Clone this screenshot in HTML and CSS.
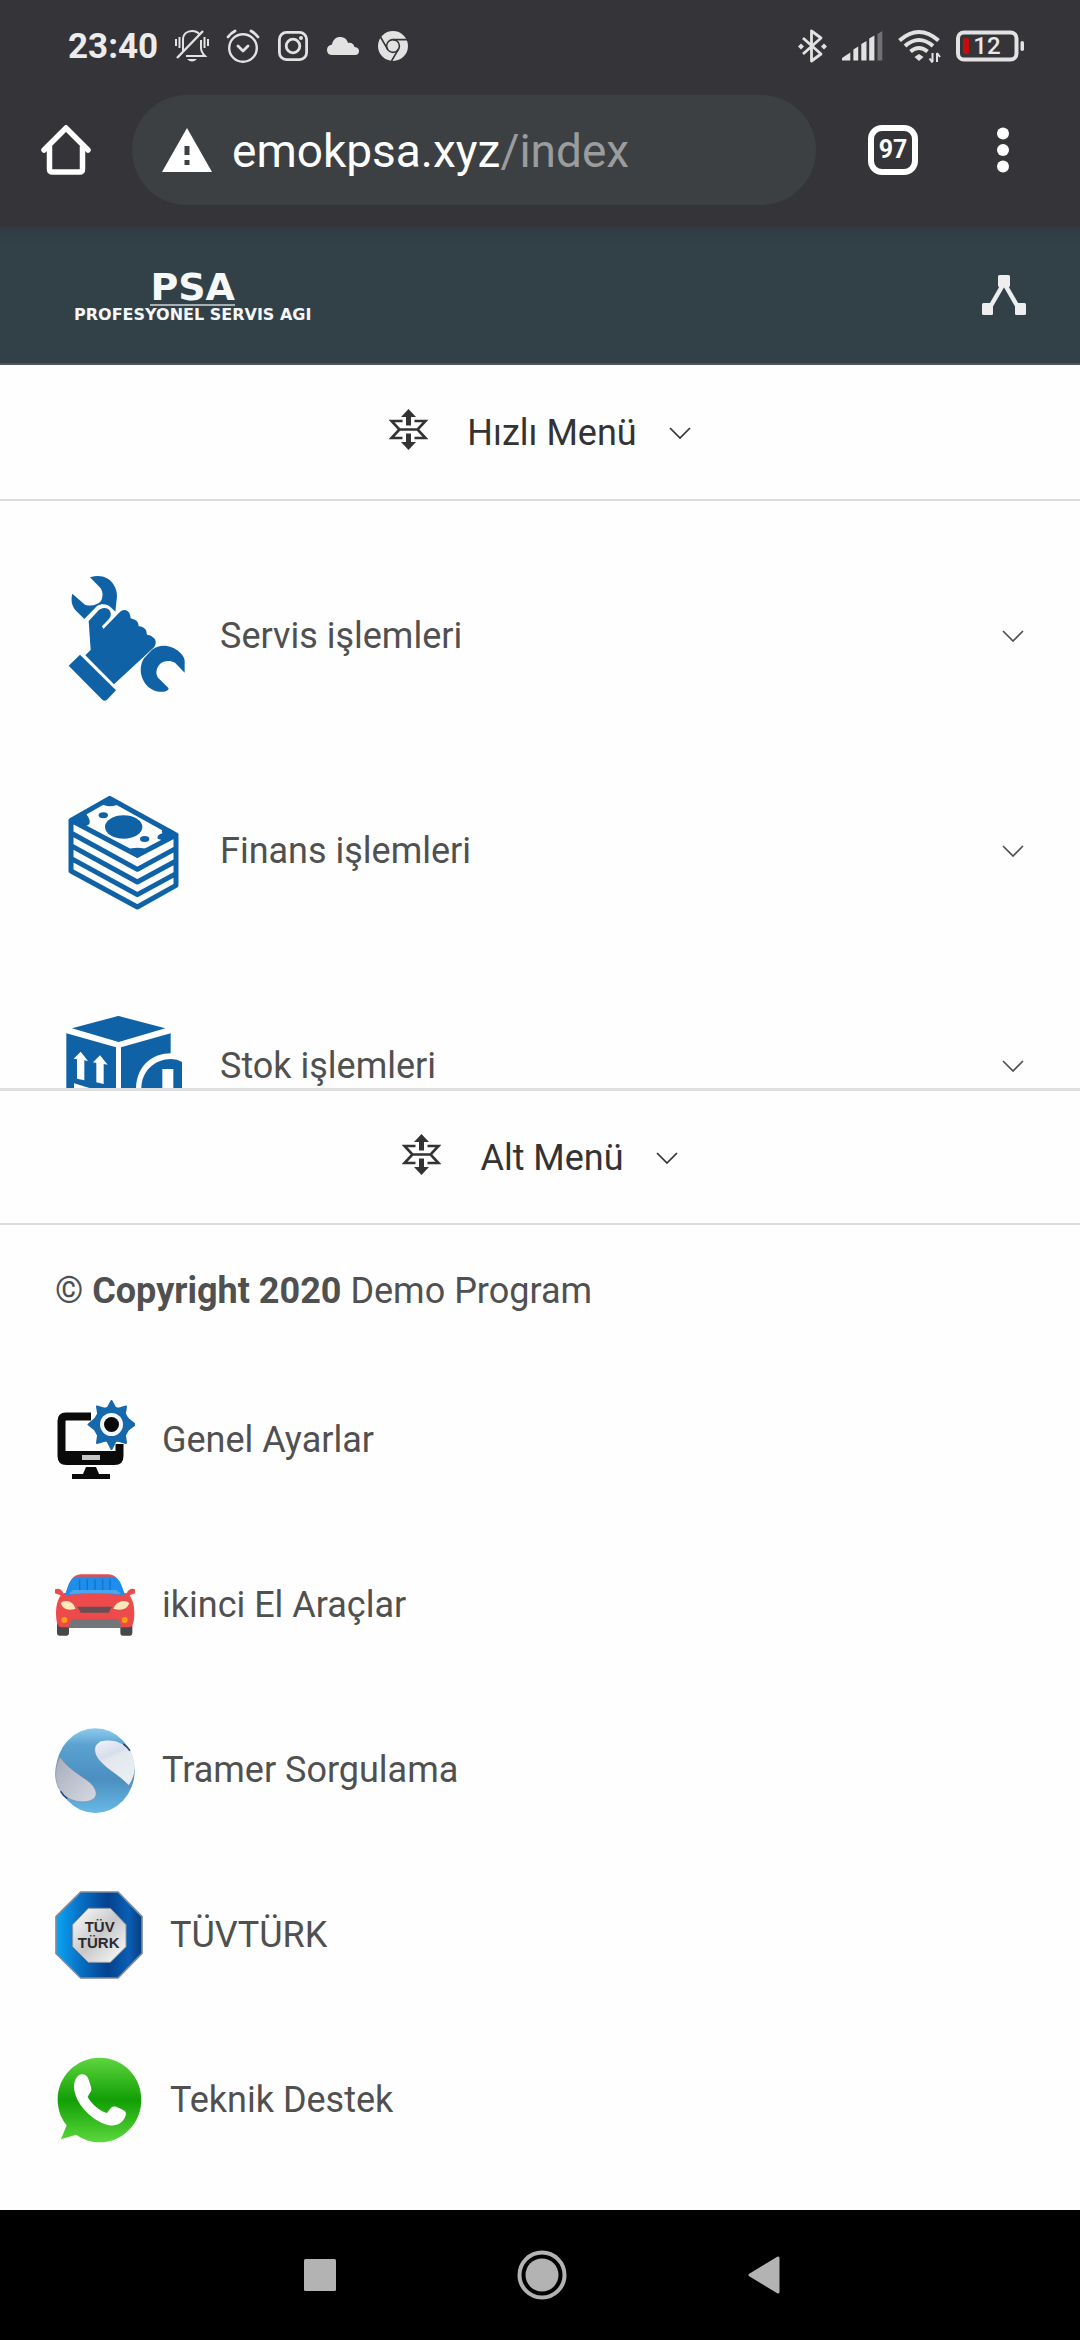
FILE: index.html
```html
<!DOCTYPE html>
<html lang="tr">
<head>
<meta charset="utf-8">
<meta name="viewport" content="width=device-width, initial-scale=1">
<title>PSA Profesyonel Servis Ağı</title>
<link rel="stylesheet" href="styles.css">
</head>
<body>
<svg class="sprite" aria-hidden="true">
  <symbol id="chevron" viewBox="0 0 22 12"><path d="M1 1 11 11 21 1" fill="none" stroke="currentColor" stroke-width="1.7"/></symbol>
  <symbol id="expand" viewBox="0 0 39 48">
    <g fill="none" stroke="currentColor" stroke-width="2.6">
      <path d="M13.500 12H2.500l8 8.500-8 8.500h11M25.500 12h11l-8 8.500 8 8.500h-11M10.500 20.500h18"/>
    </g>
    <path d="M19.500 0 27 8h-5v8.500h-5V8h-5zM19.500 41 27 33h-5v-8.500h-5V33h-5z" fill="currentColor"/>
  </symbol>
</svg>

<div class="statusbar">
  <div class="status-left">
    <span class="clock">23:40</span>
    <svg width="34" height="34" viewBox="0 0 34 34" fill="none" stroke="currentColor" stroke-width="2">
      <path d="M8 23V11C8 5 12 2 17 2c4 0 6 1 8 4M26 11v8c0 3 1 5 4 8H11" />
      <path d="M2 29 28 2" stroke-width="2.400"/><path d="M12 30h10q-5 5-10 0z" fill="currentColor" stroke="none"/>
      <path d="M1 10v7M4.500 8v11M29.500 8v11M33 10v7"/>
    </svg>
    <svg width="34" height="34" viewBox="0 0 34 34" fill="none" stroke="currentColor" stroke-width="2.400" stroke-linecap="round" stroke-linejoin="round">
      <circle cx="17" cy="19" r="13.800"/><path d="m12 17 5 5 5-5M2 8q3-4 7-6M32 8q-3-4-7-6" stroke-width="2.800"/>
    </svg>
    <svg width="32" height="32" viewBox="0 0 32 32" fill="none" stroke="currentColor" stroke-width="2.800">
      <rect x="2.400" y="2.400" width="27.200" height="27.200" rx="7"/><circle cx="16" cy="16" r="6.800"/><circle cx="24" cy="8" r="2" fill="currentColor" stroke="none"/>
    </svg>
    <svg width="34" height="20" viewBox="0 0 34 20"><path d="M6 19C2 19 1 16 1 13.500S3 9 6 8.500C7 3.500 10 1 14 1c4 0 7 2 8 6 3-1 6 1 6.500 4C32 11.500 33 13 33 15s-1 4-4 4z" fill="currentColor"/></svg>
    <svg width="32" height="32" viewBox="0 0 32 32">
      <circle cx="16" cy="16" r="15" fill="currentColor"/>
      <g fill="none" stroke="#353539" stroke-width="1.600"><circle cx="16" cy="16" r="6.400"/><path d="M16 9.600h14M10.500 19.200 3.500 7M21.500 19.200 14.500 31"/></g>
    </svg>
  </div>
  <div class="status-right">
    <svg width="29" height="34" viewBox="0 0 29 34" fill="none" stroke="currentColor" stroke-width="2.800" stroke-linejoin="round">
      <path d="M5 9 23 25 13.500 32V2L23 9 5 25"/><path d="m3 14.500 3 3-3 3-3-3zM26 14.500l3 3-3 3-3-3z" fill="currentColor" stroke="none"/>
    </svg>
    <svg width="41" height="30" viewBox="0 0 41 30" fill="currentColor">
      <path d="M0 29.500V27l8.300-5.400v7.900zM11.400 18.500l4.800-3v14h-4.800zM19.300 13l5.200-3v19.500h-5.200zM27.200 7.500l5.200-3v25h-5.200z"/><path d="M35.500 3 40.300 0v29.500h-4.800z" opacity=".35"/>
    </svg>
    <svg width="43" height="34" viewBox="0 0 43 34" fill="none" stroke="currentColor" stroke-width="4">
      <path d="M1.500 11.500q19.500-17 39 0M7 17q14-12 28 0M12.500 22.500q8.500-7 17 0"/><path d="m21 25 4.500 3-4.500 4-4.500-4z" fill="currentColor" stroke="none"/>
      <path d="M34.500 24v9M34.500 33.500l-3-4M39 33v-9M39 24l3 4" stroke-width="2"/>
    </svg>
    <svg width="68" height="32" viewBox="0 0 68 32">
      <rect x="2" y="2.500" width="58.500" height="27" rx="6" fill="none" stroke="currentColor" stroke-width="4"/>
      <rect x="64.500" y="11" width="3.500" height="10" rx="1.700" fill="currentColor"/>
      <rect x="7" y="8" width="6" height="16" rx="2" fill="#c60c0c"/>
      <text class="battery-level" x="31" y="24" text-anchor="middle">12</text>
    </svg>
  </div>
</div>

<nav class="toolbar" aria-label="Tarayıcı">
  <button class="tool home" aria-label="Ana sayfa"><svg width="50" height="50" viewBox="0 0 50 50" fill="none" stroke="currentColor" stroke-width="5.500" stroke-linejoin="round" stroke-linecap="round"><path d="M3 25 25 3l22 22" stroke-linejoin="miter"/><path d="M8.500 22v22q0 3 3 3h27q3 0 3-3V22"/></svg></button>
  <button class="address">
    <svg width="50" height="44" viewBox="0 0 50 44"><path d="M25 0 50 44H0z" fill="currentColor"/><path d="M22.500 18h5v9h-5zM22.500 32h5v5h-5z" fill="#3c4043"/></svg>
    <span class="url">emokpsa.xyz<span class="path">/index</span></span>
  </button>
  <button class="tool tabs" aria-label="Sekmeler">97</button>
  <button class="tool more" aria-label="Diğer"><svg width="50" height="50" viewBox="0 0 50 50" fill="currentColor"><circle cx="25" cy="8.500" r="6"/><circle cx="25" cy="25" r="6"/><circle cx="25" cy="41.500" r="6"/></svg></button>
</nav>

<header class="site-header">
  <a class="logo" href="#"><span class="logo-name">PSA</span><span class="logo-tag">PROFESYONEL SERVIS AGI</span></a>
  <button class="share" aria-label="Menü"><svg width="44" height="40" viewBox="0 0 44 40" fill="currentColor"><path d="M22 8 7 34M22 8l15 26" stroke="currentColor" stroke-width="4.500"/><rect x="16" width="12" height="12" rx="1.500"/><rect y="28" width="11" height="12" rx="1.500"/><rect x="33" y="28" width="11" height="12" rx="1.500"/></svg></button>
</header>

<main class="page">
  <button class="section-toggle"><svg class="expand"><use href="#expand"/></svg><span class="section-name">Hızlı Menü</span><svg class="chevron"><use href="#chevron"/></svg></button>

  <ul class="quick-menu">
    <li><button class="quick-item">
      <svg class="quick-icon" viewBox="78 63 360 390" fill="#1062a6">
        <path d="M150 82C180 73 205 80 221 104c10 15 12 34 8 52l-3 29-12-12c-12-12-30-13-43-5l-38 39-25-25C95 168 92 150 97 131l38 33c17 6 38 1 48-11 7-12 6-27-1-38z"/>
        <path d="M146 213l26-28c10-14 31-15 38-2 5 10 2 18-4 25l-20 21 4 8 49-50c10-11 26-9 31 7l2 11 12 4q12 5 12 20 14 1 22 11l3 14q16 2 24 14 6 13-3 24L222 403l-86-87 16-16z"/>
        <path d="M120 314 228 421 201 449q-7 6-14 0L86 347z"/>
        <path d="M434 368l-29-30c-17-9-37-5-47 6-10 12-12 29-3 40l31 31q-1 9-15 10c-25 2-45-9-57-27-17-26-14-54-2-73l24-26c27-20 61-12 82 7 11 9 16 19 16 28z"/>
      </svg>
      <span>Servis işlemleri</span><svg class="chevron"><use href="#chevron"/></svg></button></li>
    <li><button class="quick-item">
      <svg class="quick-icon" viewBox="78 48 360 390" fill="none" stroke="#1062a6" stroke-width="15" stroke-linejoin="round">
        <path d="M93 151 209 85 408 195 292 256zM93 151V303L292 411 408 346V195M93 189 292 298 408 235M93 227 292 336 408 273M93 265 292 374 408 311"/>
        <g fill="#1062a6" stroke="none"><ellipse cx="251" cy="171" rx="56" ry="35"/><ellipse cx="190" cy="136" rx="14" ry="9"/><ellipse cx="314" cy="207" rx="14" ry="9"/>
        <path d="M176 97q35 24 69 0l-36-16zM93 150q40 28 55 12 5-12-10-31zM258 239q35-12 69 0l-35 25zM408 195q-10-20-34-21-12 5-7 16-18 6-14 16l30 10z"/></g>
      </svg>
      <span>Finans işlemleri</span><svg class="chevron"><use href="#chevron"/></svg></button></li>
    <li><button class="quick-item">
      <svg class="quick-icon" viewBox="78 33 360 390" fill="#1062a6">
        <path d="M96 115 226 80q9-4 18 0L376 115 236 156zM79 130 228 172V390L79 345zM243 172 392 130V190C340 190 288 225 288 300v75l-45 15z"/>
        <path d="M304 294c0-50 40-87 90-87q18 0 32 9V390h-90q-32-40-32-96z"/>
        <g fill="#fff"><path d="M122 185 144 213l-11-2v60l-22-5v-58l-10-2zM180 196 203 224l-12-2v60l-22-5v-58l-10-2zM102 280l80 24v14l-80-24zM367 237h33v70h-33z"/></g>
      </svg>
      <span>Stok işlemleri</span><svg class="chevron"><use href="#chevron"/></svg></button></li>
  </ul>

  <button class="section-toggle lower"><svg class="expand"><use href="#expand"/></svg><span class="section-name">Alt Menü</span><svg class="chevron"><use href="#chevron"/></svg></button>

  <p class="copyright">© <strong>Copyright 2020</strong> Demo Program</p>

  <ul class="link-list">
    <li><a href="#">
      <svg width="80" height="88" viewBox="0 0 80 88">
        <path d="M36 20.500H11q-4.500 0-4.500 4.500v35q0 5 5 5h48q5 0 5-5V48" fill="none" stroke="#0a0a0a" stroke-width="8"/>
        <path d="M8 55h58v11H8z" fill="#0a0a0a"/><path d="M27 59h18v5H27z" fill="#c4c4c4"/>
        <path d="M31 71h10l3 7h11v5H17v-5h11z" fill="#0a0a0a"/>
        <circle cx="56.500" cy="28.500" r="20" fill="#fefefe"/>
        <path d="m56.500 5 4.500 8.500 10-3-1.500 9.500 10.500 8.500-10.500 8 1.500 10.500-10-3-4.500 9-4.500-9-10 3 1.500-10.500-10-8 10-8.500-1.500-9.500 10 3z" fill="#1668ac" stroke="#1668ac" stroke-width="2" stroke-linejoin="round"/>
        <circle cx="56.500" cy="28.500" r="18" fill="#1668ac"/>
        <circle cx="56.500" cy="28.500" r="11.500" fill="#f4f7fa"/><circle cx="56.500" cy="28.500" r="7.500" fill="#080808"/>
      </svg><span>Genel Ayarlar</span></a></li>
    <li><a href="#">
      <svg width="80" height="88" viewBox="45 63 240 264">
        <path d="M51 250h36v30q0 7-7 7H58q-7 0-7-7zM241 250h36v30q0 7-7 7h-22q-7 0-7-7z" fill="#46484c"/>
        <path d="M45 148q18-6 25 12l8-2c10-30 18-55 45-55h82c27 0 35 25 47 55l8 2q8-18 25-12v12l-16 6q14 22 14 50c0 34-5 46-18 46H65c-14 0-17-20-17-46q0-28 14-50l-17-6z" fill="#ed4b4b"/>
        <path d="M76 166C84 132 94 110 110 110h108c18 0 28 22 36 56-60-6-118-6-178 0z" fill="#1e8eea"/>
        <path d="M98 150h132l14 13q-80-6-158 0z" fill="#4aa6f0"/><path d="M119 118v32M142 118v32M165 118v32M188 118v32M210 118v32" stroke="#1672c8" stroke-width="4"/>
        <path d="M112 200h104l-10 18h-84z" fill="#665056"/><path d="M94 238h142l8 26H84z" fill="#727579"/>
        <path d="M62 190c12-14 40-6 44 16-18 6-36 4-44-16zM268 190c-12-14-40-6-48 16 22 6 40 4 48-16z" fill="#ffe9ba"/>
        <circle cx="73" cy="240" r="9" fill="#ff9d17"/><circle cx="254" cy="240" r="9" fill="#ff9d17"/>
      </svg><span>ikinci El Araçlar</span></a></li>
    <li><a href="#">
      <svg width="80" height="88" viewBox="45 558 240 264">
        <defs><linearGradient id="ball" x2="0" y2="1"><stop offset="0" stop-color="#8dcbed"/><stop offset=".2" stop-color="#5ba2d0"/><stop offset=".6" stop-color="#4a8fc0"/><stop offset="1" stop-color="#68b8e6"/></linearGradient>
        <linearGradient id="shade" x2="1" y2="1"><stop offset="0" stop-color="#a6adbc"/><stop offset="1" stop-color="#d5d9e2"/></linearGradient>
        <linearGradient id="pale" x2=".4" y2="1"><stop offset="0" stop-color="#f3f4fb"/><stop offset=".4" stop-color="#d7ddec"/><stop offset=".5" stop-color="#e3e8ee"/><stop offset="1" stop-color="#e8eef2"/></linearGradient></defs>
        <ellipse cx="166" cy="692" rx="118" ry="127" fill="url(#ball)"/>
        <path d="M270 632C246 602 205 596 178 606C158 616 160 642 180 664C206 692 240 708 266 736C288 706 290 664 270 632z" fill="url(#pale)"/>
        <path d="M178 606C158 616 160 642 180 664C206 692 240 708 266 736" fill="none" stroke="#6c8fb0" stroke-width="2"/>
        <path d="M60 650C38 690 44 738 72 766C98 788 142 792 162 776C176 762 166 742 148 726C120 704 84 686 60 650z" fill="url(#shade)" stroke="#7b879a" stroke-width="2"/>
        <path d="M250 612q12 8 20 20M62 754q8 14 20 22" stroke="#254a84" stroke-width="5" fill="none"/>
      </svg><span>Tramer Sorgulama</span></a></li>
    <li><a href="#">
      <svg width="88" height="88" viewBox="45 63 264 264">
        <defs><linearGradient id="octagon"><stop offset="0" stop-color="#0aa5f5"/><stop offset=".28" stop-color="#0870c4"/><stop offset=".6" stop-color="#04418f"/><stop offset=".85" stop-color="#0a5fb4"/><stop offset="1" stop-color="#063b80"/></linearGradient>
        <linearGradient id="plate" x2="1" y2="1"><stop offset="0" stop-color="#fff"/><stop offset=".5" stop-color="#c8c8ca"/><stop offset="1" stop-color="#fff"/></linearGradient></defs>
        <path d="M122 66H234L306 140V250L234 324H122L48 250V140z" fill="url(#octagon)" stroke="#7b8b9c" stroke-width="5"/>
        <path d="M145 115H211L258 164V230L211 277H145L98 230V164z" fill="url(#plate)" stroke="#8a98a8" stroke-width="3"/>
        <text class="badge-text" x="179" y="187" text-anchor="middle">TÜV</text><text class="badge-text" x="176" y="235" text-anchor="middle">TÜRK</text>
      </svg><span>TÜVTÜRK</span></a></li>
    <li><a href="#">
      <svg width="88" height="88" viewBox="45 558 264 264">
        <defs><linearGradient id="bubble" x2="0" y2="1"><stop offset="0" stop-color="#5fd53f"/><stop offset=".5" stop-color="#119f05"/><stop offset="1" stop-color="#5bd83c"/></linearGradient></defs>
        <path d="M179 563c70 0 125 56 125 126s-55 128-125 128c-26 0-50-8-70-23l-46 14 17-42C63 745 53 718 53 689c0-70 56-126 126-126z" fill="url(#bubble)"/>
        <path d="M102 648c1-18 10-33 22-35 14-2 20 8 24 22 5 16 10 24 2 33l-7 12c10 20 34 42 58 49l12-16c8-6 16-3 24 1 14 6 24 10 20 22-6 22-26 34-50 30-50-12-105-66-105-118z" fill="#fff"/>
      </svg><span>Teknik Destek</span></a></li>
  </ul>
</main>

<nav class="system-nav" aria-label="Sistem">
  <button aria-label="Son uygulamalar"><svg width="32" height="32" viewBox="0 0 32 32"><rect width="32" height="32" rx="1.500" fill="currentColor"/></svg></button>
  <button aria-label="Ana ekran"><svg width="50" height="50" viewBox="0 0 50 50"><circle cx="25" cy="25" r="22.500" fill="none" stroke="currentColor" stroke-width="4"/><circle cx="25" cy="25" r="16.500" fill="currentColor"/></svg></button>
  <button aria-label="Geri"><svg width="32" height="38" viewBox="0 0 32 38"><path d="M30 2v34L2 19z" fill="currentColor" stroke="currentColor" stroke-width="3" stroke-linejoin="round"/></svg></button>
</nav>
</body>
</html>
```
FILE: styles.css
```css
* { box-sizing: border-box; }
body {
  margin: 0;
  min-height: 100vh;
  display: flex;
  flex-direction: column;
  background: #fefefe;
  color: #505050;
  font-family: Roboto, "Noto Sans", sans-serif;
  font-size: 36px;
  line-height: 53px;
}
button {
  margin: 0;
  padding: 0;
  border: 0;
  background: none;
  color: inherit;
  font: inherit;
  cursor: pointer;
}
a { color: inherit; text-decoration: none; }
ul { margin: 0; padding: 0; list-style: none; }
svg { display: block; flex: none; }
.sprite { position: absolute; width: 0; height: 0; }

.statusbar {
  display: flex;
  justify-content: space-between;
  align-items: center;
  height: 92px;
  padding: 0 56px 0 68px;
  background: #353539;
  color: #e2e2e2;
}
.status-left, .status-right { display: flex; align-items: center; }
.status-left { gap: 17px; }
.status-right { gap: 15px; }
.clock { font-size: 35px; font-weight: 700; color: #ececec; }
.battery-level { font-size: 24px; font-weight: 500; fill: #e8e8e8; }

.toolbar {
  display: flex;
  align-items: center;
  padding: 3px 52px 22px 41px;
  background: #353539;
  color: #fff;
}
.tool { flex: none; width: 50px; height: 50px; }
.address {
  flex: 1;
  display: flex;
  align-items: center;
  gap: 20px;
  height: 110px;
  margin: 0 52px 0 41px;
  padding: 0 30px;
  border-radius: 55px;
  background: #3c4043;
}
.url { padding-top: 2px; font-size: 46px; white-space: nowrap; }
.path { color: #9a9c9e; }
.tabs {
  border: 6px solid #fff;
  border-radius: 14px;
  font-size: 25px;
  font-weight: 700;
  line-height: 38px;
}
.more { margin-left: 60px; }

.site-header {
  display: flex;
  justify-content: space-between;
  align-items: center;
  height: 138px;
  padding: 0 54px 0 74px;
  border-bottom: 2px solid #50575c;
  background: linear-gradient(#2f3b42, #324148 20px);
  color: #eceef0;
}
.logo {
  display: flex;
  flex-direction: column;
  align-items: center;
  padding-top: 4px;
  color: #f6f7f8;
  font-family: "DejaVu Sans", sans-serif;
  font-weight: 700;
}
.logo-name {
  border-bottom: 2px solid #a9b0b4;
  font-size: 38px;
  line-height: 34px;
}
.logo-tag { font-size: 16px; line-height: 18px; }

.page { flex: 1; }
.section-toggle {
  display: flex;
  justify-content: center;
  align-items: center;
  width: 100%;
  height: 136px;
  padding-top: 2px;
  border-bottom: 2px solid #dcdcdc;
  color: #333;
}
.section-toggle.lower { height: 137px; border-top: 3px solid #dfdfdf; }
.section-name { margin: 0 32px 0 39px; }
.expand { width: 39px; height: 48px; }
.chevron { width: 22px; height: 12px; }

.quick-menu {
  max-height: 587px;
  padding-top: 27px;
  overflow-y: auto;
  scrollbar-width: none;
}
.quick-item {
  display: flex;
  align-items: center;
  gap: 34px;
  width: 100%;
  height: 215px;
  padding: 0 56px 0 66px;
  text-align: left;
}
.quick-icon { width: 120px; height: 130px; }
.quick-item .chevron { margin-left: auto; }

.copyright { margin: 40px 55px 39px; }
.link-list { padding: 0 55px; }
.link-list a {
  display: flex;
  align-items: center;
  gap: 27px;
  height: 165px;
}
.quick-item span, .link-list span { padding-top: 2px; }
.badge-text {
  font-family: "Liberation Sans", sans-serif;
  font-size: 45px;
  font-weight: 700;
  fill: #2b2b2f;
}

.system-nav {
  display: flex;
  justify-content: center;
  height: 130px;
  padding-left: 4px;
  background: #000;
  color: #b3b3b3;
}
.system-nav button {
  display: flex;
  justify-content: center;
  align-items: center;
  width: 222px;
}
```
